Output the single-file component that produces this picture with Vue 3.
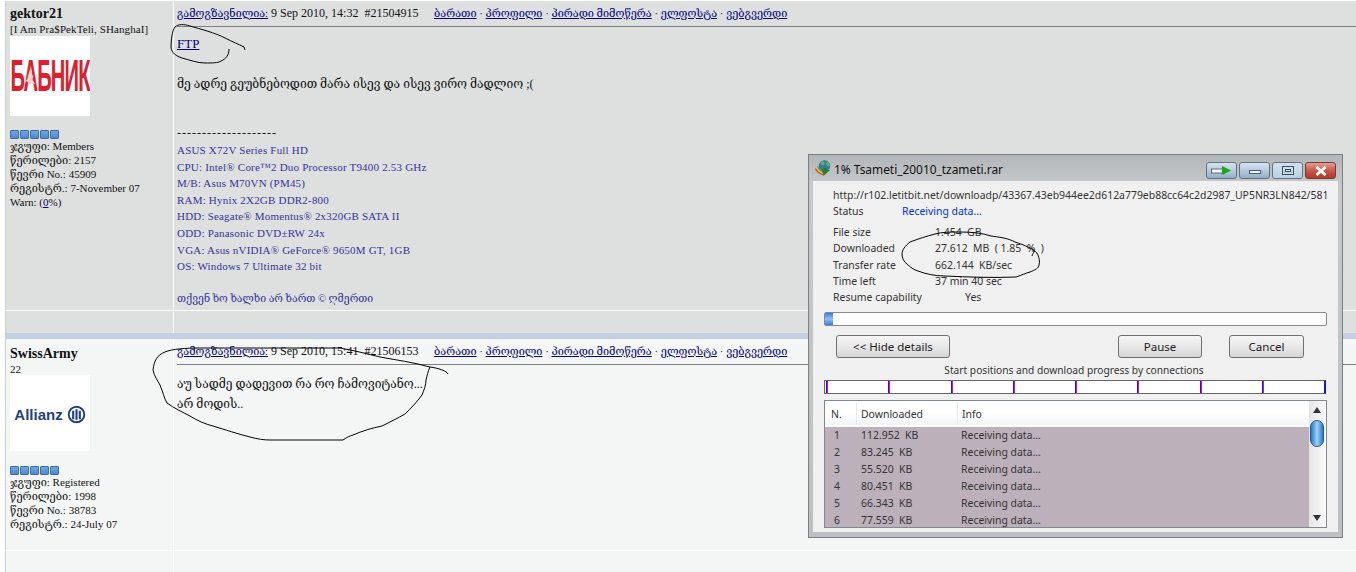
<script setup>
const post1Stats = [
  { label: 'ჯგუფი:', value: 'Members' },
  { label: 'წერილები:', value: '2157' },
  { label: 'წევრი No.:', value: '45909' },
  { label: 'რეგისტრ.:', value: '7-November 07' }
]
const post2Stats = [
  { label: 'ჯგუფი:', value: 'Registered' },
  { label: 'წერილები:', value: '1998' },
  { label: 'წევრი No.:', value: '38783' },
  { label: 'რეგისტრ.:', value: '24-July 07' }
]
const sig = [
  'ASUS X72V Series Full HD',
  'CPU: Intel® Core™2 Duo Processor T9400 2.53 GHz',
  'M/B: Asus M70VN (PM45)',
  'RAM: Hynix 2X2GB DDR2-800',
  'HDD: Seagate® Momentus® 2x320GB SATA II',
  'ODD: Panasonic DVD±RW 24x',
  'VGA: Asus nVIDIA® GeForce® 9650M GT, 1GB',
  'OS: Windows 7 Ultimate 32 bit'
]
const links = ['ბარათი', 'პროფილი', 'პირადი მიმოწერა', 'ელფოსტა', 'ვებგვერდი']
const details = [
  { k: 'File size', v: '1.454  GB' },
  { k: 'Downloaded', v: '27.612  MB  ( 1.85  %  )' },
  { k: 'Transfer rate', v: '662.144  KB/sec' },
  { k: 'Time left', v: '37 min 40 sec' }
]
const conns = [
  ['1', '112.952  KB'],
  ['2', '83.245  KB'],
  ['3', '55.520  KB'],
  ['4', '80.451  KB'],
  ['5', '66.343  KB'],
  ['6', '77.559  KB']
]
const ticks = [0, 1, 2, 3, 4, 5, 6, 7]
const pips = [0, 1, 2, 3, 4]
</script>

<template>
  <div class="page">
    <section class="post post-a">
      <aside class="side side-a">
        <div class="name">gektor21</div>
        <div class="title">[I Am Pra$PekTeli, SHanghaI]</div>
        <div class="avatar avatar-a">
          <span class="babnik">БАБНИК</span>
          <svg class="figure" width="10" height="16" viewBox="0 0 12 18"><path d="M6 0l2 2-1 3 3 3-1 4 3 5H5L2 14l-2 1 3-4 1-5z" fill="#f6d5d5" /></svg>
        </div>
        <div class="pips"><i v-for="p in pips" :key="p"></i></div>
        <div class="stats">
          <div v-for="s in post1Stats" :key="s.label">{{ s.label }} {{ s.value }}</div>
          <div>Warn: (<a>0</a>%)</div>
        </div>
      </aside>
      <div class="main main-a">
        <header class="head">
          <a class="sent">გამოგზავნილია:</a>
          <span class="date">9 Sep 2010, 14:32 &nbsp;#21504915</span>
          <span class="links">
            <template v-for="(l, i) in links" :key="l"><span v-if="i"> · </span><a>{{ l }}</a></template>
          </span>
        </header>
        <div class="body body-a">
          <a class="ftp">FTP</a>
          <p class="geo">მე ადრე გეუბნებოდით მარა ისევ და ისევ ვირო მადლიო ;(</p>
          <div class="dash">--------------------</div>
          <div class="sig">
            <div v-for="l in sig" :key="l">{{ l }}</div>
            <div class="sig-last">თქვენ ხო ხალხი არ ხართ © ღმერთი</div>
          </div>
        </div>
      </div>
    </section>
    <section class="foot foot-a"><div></div><div></div></section>
    <div class="band"></div>
    <section class="post post-b">
      <aside class="side side-b">
        <div class="name">SwissArmy</div>
        <div class="title">22</div>
        <div class="avatar avatar-b">
          <span class="allianz">Allianz</span>
          <svg width="19" height="19" viewBox="0 0 20 20" fill="none" stroke="#1f3f8a">
            <circle cx="10" cy="10" r="8.2" stroke-width="2" />
            <path d="M6.5 6v9M10 4.5v11M13.5 6v9" stroke-width="2.2" />
          </svg>
        </div>
        <div class="pips"><i v-for="p in pips" :key="p"></i></div>
        <div class="stats">
          <div v-for="s in post2Stats" :key="s.label">{{ s.label }} {{ s.value }}</div>
        </div>
      </aside>
      <div class="main main-b">
        <header class="head">
          <a class="sent">გამოგზავნილია:</a>
          <span class="date">9 Sep 2010, 15:41 &nbsp;#21506153</span>
          <span class="links">
            <template v-for="(l, i) in links" :key="l"><span v-if="i"> · </span><a>{{ l }}</a></template>
          </span>
        </header>
        <div class="body body-b">
          <p>აუ სადმე დადევით რა რო ჩამოვიტანო...</p>
          <p>არ მოდის..</p>
        </div>
      </div>
    </section>
    <section class="foot foot-b"><div></div><div></div></section>

    <div class="win">
      <div class="win-title">
        <svg class="win-icon" width="16" height="16" viewBox="0 0 16 16" fill="none">
          <circle cx="9.5" cy="6" r="5.8" fill="#2c78b8" />
          <path d="M6 1.5c2-.8 3 .2 3.500 1.500s-.5 2.500-2 2.500S5 3.500 6 1.500zM12 1.500c1.500.8 3 2.500 3 4.500l-2.500.5-1.500-2.500zM9 7.500l3 .5-1 3-2 .5z" fill="#6cb33f" />
          <path d="M.5 8.500C2 12 5 14 9 15" stroke="#d93a2b" stroke-width="1.400" />
          <path d="M1.500 7.500C3 10.500 5.500 12.500 9 13.500" stroke="#f0c020" stroke-width="1.400" />
          <path d="M2.500 6.500C4 9 6 11 9 12" stroke="#3aa83a" stroke-width="1.400" />
          <path d="M9 15.500l6-5.500h-3V7.500H9V10H6.500z" fill="#2e7d1e" />
        </svg>
        <span class="win-name">1% Tsameti_20010_tzameti.rar</span>
        <div class="win-btns">
          <span class="wb wb-arrow">
            <svg width="21" height="9" viewBox="0 0 21 9"><rect x=".5" y="3" width="13" height="4" fill="#f4f7fa" stroke="#3f4f60" stroke-width=".8"/><path d="M11 0l9 4.500-9 4.500z" fill="#17a817"/></svg>
          </span>
          <span class="wb wb-min"><em></em></span>
          <span class="wb wb-max"><b><u></u></b></span>
          <span class="wb wb-close">
            <svg width="14" height="10" viewBox="0 0 14 10"><path d="M2.500 1l9 8M11.500 1l-9 8" stroke="#fff" stroke-width="2.800"/></svg>
          </span>
        </div>
      </div>
      <div class="win-body">
        <div class="url">http://r102.letitbit.net/downloadp/43367.43eb944ee2d612a779eb88cc64c2d2987_UP5NR3LN842/581</div>
        <div class="status"><span class="k k-status">Status</span><span class="blue">Receiving data...</span></div>
        <div class="details">
          <div v-for="d in details" :key="d.k" class="drow"><span class="k">{{ d.k }}</span><span class="pre">{{ d.v }}</span></div>
          <div class="drow"><span class="k k-resume">Resume capability</span><span>Yes</span></div>
        </div>
        <div class="progress"><i></i></div>
        <div class="actions">
          <button class="btn btn-hide">&lt;&lt; Hide details</button>
          <button class="btn btn-pause">Pause</button>
          <button class="btn btn-cancel">Cancel</button>
        </div>
        <div class="conn-label">Start positions and download progress by connections</div>
        <div class="conn">
          <span v-for="t in ticks" :key="t" class="seg"></span>
        </div>
        <div class="list">
          <div class="list-main">
            <div class="lhead"><span class="c1">N.</span><span class="c2">Downloaded</span><span class="c3">Info</span></div>
            <div class="lrows">
              <div v-for="c in conns" :key="c[0]" class="lrow">
                <span class="c1 num">{{ c[0] }}</span><span class="c2 pre">{{ c[1] }}</span><span class="c3">Receiving data...</span>
              </div>
            </div>
          </div>
          <div class="sb">
            <span class="sb-up"></span>
            <span class="sb-thumb"></span>
            <span class="sb-down"></span>
          </div>
        </div>
      </div>
    </div>

    <svg class="ink" width="1356" height="572" viewBox="0 0 1356 572" fill="none" stroke="#000" stroke-width="1">
      <path d="M245 50L244 47C238 44 233 42 225 38C216 33 200 29 190 26C184 24 178 24 175 27C172 31 171 40 171 48C172 53 176 56 182 58C190 60 197 63 205 63C212 63 218 63 221 61C226 59 229 55 229 49" />
      <path d="M448 374C447 371 438 368 430 367C412 362 396 360 380 357C368 354 352 350 340 348L200 348C186 348 172 349 165 352C157 355 154 361 153 370C154 376 158 381 160 385C163 392 164 398 167 403C174 408 182 412 190 416C198 421 205 424 213 426C226 430 238 434 250 437C257 439 264 440 270 440L343 440C347 437 350 436 353 435C362 431 372 428 382 426C390 422 398 418 405 414C411 408 417 402 422 395C424 390 426 385 426 380C427 376 428 371 430 367" />
      <path d="M1032 256C1033 252 1035 252 1034 250C1030 248 1022 244 1015 242C1008 238 998 237 991 236C982 233 972 232 960 232C950 232 942 232 935 234C927 236 918 239 910 242C905 246 902 250 902 254C902 258 904 262 907 264C910 267 914 270 918 271C926 274 935 276 945 276C968 277 992 278 1016 277C1022 275 1026 273 1030 272C1035 270 1039 268 1039 265C1040 261 1039 258 1038 255C1037 252 1034 251 1033 250" />
    </svg>
  </div>
</template>

<style>
html, body { background: #fff; overflow: hidden; }
</style>

<style scoped>
.page {
  position: relative;
  width: 1356px;
  height: 572px;
  box-sizing: border-box;
  padding: 1px 0 0 5px;
  overflow: hidden;
  font-family: "Liberation Serif", "DejaVu Serif", serif;
  color: #111;
}
.post, .foot {
  display: grid;
  grid-template-columns: 168px 1fr;
  border-left: 1px solid #c2d0e0;
  box-sizing: border-box;
}
.post-a { height: 309px; background: #dee0df; }
.post-b { height: 211px; background: #f4f6f6; }
.foot { border-top: 1px solid #fff; }
.foot > div:first-child { border-right: 1px solid #fff; }
.foot-a { height: 23px; background: #dee0df; }
.foot-b { height: 22px; background: #f4f6f6; }
.band { height: 6px; background: #c2d0e0; }

.side { border-right: 1px solid #fff; padding-left: 4px; box-sizing: border-box; font-size: 11px; }
.side-a { padding-top: 5px; }
.side-b { padding-top: 7px; }
.name { font-size: 14px; font-weight: bold; line-height: 16px; }
.title { font-size: 11px; line-height: 15px; height: 14px; letter-spacing: .1px; white-space: nowrap; }
.side-b .title { height: 13px; }
.avatar { position: relative; width: 80px; background: #fff; display: flex; align-items: center; justify-content: center; }
.avatar-a { height: 80px; overflow: hidden; }
.avatar-b { height: 76px; gap: 4px; padding-top: 3px; box-sizing: border-box; }
.babnik {
  font: bold 24px/1 "Liberation Sans", sans-serif;
  color: #dc2030;
  display: inline-block;
  transform: scale(0.84, 1.82);
  letter-spacing: -1px;
  white-space: nowrap;
}
.figure { position: absolute; left: 15px; top: 33px; }
.allianz { font: bold 15px/1 "Liberation Sans", sans-serif; color: #1f3f8a; }
.pips { display: flex; gap: 1px; height: 9px; }
.avatar-a + .pips { margin-top: 14px; }
.avatar-b + .pips { margin-top: 15px; }
.pips i { width: 9px; height: 9px; box-sizing: border-box; background: linear-gradient(#6ea6e4, #4f88cf); border: 1px solid #3a6da8; border-radius: 1px; }
.stats { margin-top: 0; font-size: 11px; line-height: 14px; }
.stats a { color: #000080; text-decoration: underline; }

.main { padding: 0 0 0 3px; min-width: 0; }
.head {
  height: 26px;
  box-sizing: border-box;
  border-bottom: 1px solid #808080;
  padding-bottom: 1px;
  display: flex;
  align-items: center;
  white-space: pre;
}
.sent, .links a, .ftp { color: #000080; text-decoration: underline; }
.sent { font-size: 10.8px; }
.date { margin-left: 3px; font-size: 12px; width: 163px; }
.links { font-size: 10.9px; }
.body p { margin: 0; }
.ftp { display: block; font-size: 13px; line-height: 16px; margin-top: 9px; }
.body .geo { margin-top: 24px; line-height: 16px; font-size: 12.05px; }
.dash { margin-top: 33px; font-size: 12px; line-height: 17px; letter-spacing: 1px; }
.sig { font-size: 11px; line-height: 16.6px; color: #33339a; letter-spacing: .2px; }
.sig-last { margin-top: 16.6px; letter-spacing: 0; font-size: 10.5px; }
.body-b { padding-top: 9px; line-height: 20px; font-size: 12px; }

.win {
  position: absolute;
  left: 808px;
  top: 154px;
  width: 535px;
  height: 384px;
  box-sizing: border-box;
  background: linear-gradient(#b2b6b9, #c6c9cb 30px, #bdbfc0);
  border: 1px solid #7b7f82;
  padding: 0 4px 5px;
  display: flex;
  flex-direction: column;
  font-family: "Noto Sans", "Liberation Sans", sans-serif;
  font-size: 10.45px;
  color: #333;
}
.win-title { height: 26px; flex: none; display: flex; align-items: center; }
.win-icon { margin: 0 3px 0 2px; }
.win-name { font-size: 11.9px; color: #111; padding-top: 1px; }
.win-btns { margin-left: auto; margin-right: 2px; display: flex; gap: 2px; margin-top: 5px; }
.wb {
  width: 31px; height: 17px; border: 1px solid #5f7387; border-radius: 3px; box-sizing: border-box;
  display: flex; align-items: center; justify-content: center;
  background: linear-gradient(#d7e4f0, #b7c9db 50%, #93aec9);
}
.wb-max { background: linear-gradient(#d2e0ec, #bcd0e2); }
.wb-close { background: linear-gradient(#e0a097, #c9584a 50%, #ae3a2c); border-color: #7a3930; }
.wb-min em { display: block; width: 12px; height: 4px; background: #eef3f8; border: 1px solid #4a5d70; box-sizing: border-box; margin-top: 3px; }
.wb-max b { display: flex; align-items: center; justify-content: center; width: 12px; height: 9px; border: 1px solid #3f5164; box-sizing: border-box; }
.wb-max u { display: block; width: 6px; height: 3px; border: 1px solid #3f5164; box-sizing: border-box; }
.win-body { flex: 1; background: #f0f0f0; padding: 0 0 0 11px; min-height: 0; }
.url { margin: 6px 0 0 9px; height: 16px; line-height: 16px; white-space: nowrap; }
.status { margin-left: 9px; height: 16px; line-height: 16px; display: flex; }
.blue { color: #0033e0; }
.details { margin: 5px 0 0 9px; }
.drow { height: 16.25px; line-height: 16.25px; display: flex; white-space: pre; }
.k { width: 102px; flex: none; }
.k-status { width: 69px; }
.k-resume { width: 132px; }
.pre { white-space: pre; }
.progress {
  margin-top: 6.75px; width: 503px; height: 14px; box-sizing: border-box; background: #fff;
  border: 1px solid #8a8a8a; border-radius: 2px; overflow: hidden;
}
.progress i { display: block; width: 8px; height: 100%; background: linear-gradient(#2f7fe0, #8ec0f5 50%, #2f7fe0); }
.actions { margin-top: 9px; height: 23px; display: flex; padding-left: 12px; }
.btn {
  font: inherit; font-size: 11.5px; color: #222; height: 23px; padding: 0; box-sizing: border-box;
  border: 1px solid #707070; border-radius: 3px;
  background: linear-gradient(#f6f6f6, #e8e8e8 50%, #d6d6d6);
}
.btn-hide { width: 114px; }
.btn-pause { width: 84px; margin-left: 168px; }
.btn-cancel { width: 75px; margin-left: 27px; }
.conn-label { margin-top: 3px; height: 18px; line-height: 18px; text-align: center; width: 500px; font-size: 10.2px; }
.conn {
  margin-top: 1px; width: 502px; height: 14px; box-sizing: border-box; background: #fff;
  border: 1px solid #666; display: flex; padding-left: 1px; border-right: 2px solid #1818c8;
}
.seg { flex: 1; background: linear-gradient(90deg, #1818d0 1px, #e000e0 1px, #e000e0 2px, transparent 2px); }
.list {
  margin-top: 6px; width: 503px; height: 128px; box-sizing: border-box;
  border: 1px solid #828790; display: flex; background: #fff; overflow: hidden;
}
.list-main { flex: 1; min-width: 0; display: flex; flex-direction: column; }
.lhead {
  height: 26px; flex: none; display: flex; align-items: center; padding-top: 2px;
  background: linear-gradient(#fff, #fff 50%, #f3f4f6); border-bottom: 2px solid #fff; box-sizing: border-box;
}
.c1 { width: 36px; padding-left: 6px; box-sizing: border-box; flex: none; }
.c2 { width: 100px; flex: none; }
.c3 { flex: 1; }
.lhead .c2, .lhead .c3 { border-left: 1px solid #e6e8ec; padding-left: 4px; height: 22px; line-height: 22px; box-sizing: border-box; }
.lhead .c2 { width: 101px; margin-left: -5px; }
.lrows { flex: 1; background: #bcb1ba; }
.lrow { height: 17px; line-height: 17px; display: flex; }
.num { padding-left: 9px; }
.sb { width: 17px; flex: none; background: linear-gradient(90deg, #e6e6e6, #fafafa); position: relative; }
.sb-up, .sb-down { position: absolute; left: 4px; width: 0; height: 0; border-left: 4px solid transparent; border-right: 4px solid transparent; }
.sb-up { top: 6px; border-bottom: 6px solid #333; }
.sb-down { bottom: 6px; border-top: 6px solid #333; }
.sb-thumb {
  position: absolute; left: 1px; top: 19px; width: 14px; height: 27px; box-sizing: border-box;
  border-radius: 7px; border: 1px solid #1a5aa8;
  background: linear-gradient(90deg, #2a76c8, #9fd2f8 50%, #2a76c8);
}
.ink { position: absolute; left: 0; top: 0; pointer-events: none; }
</style>
